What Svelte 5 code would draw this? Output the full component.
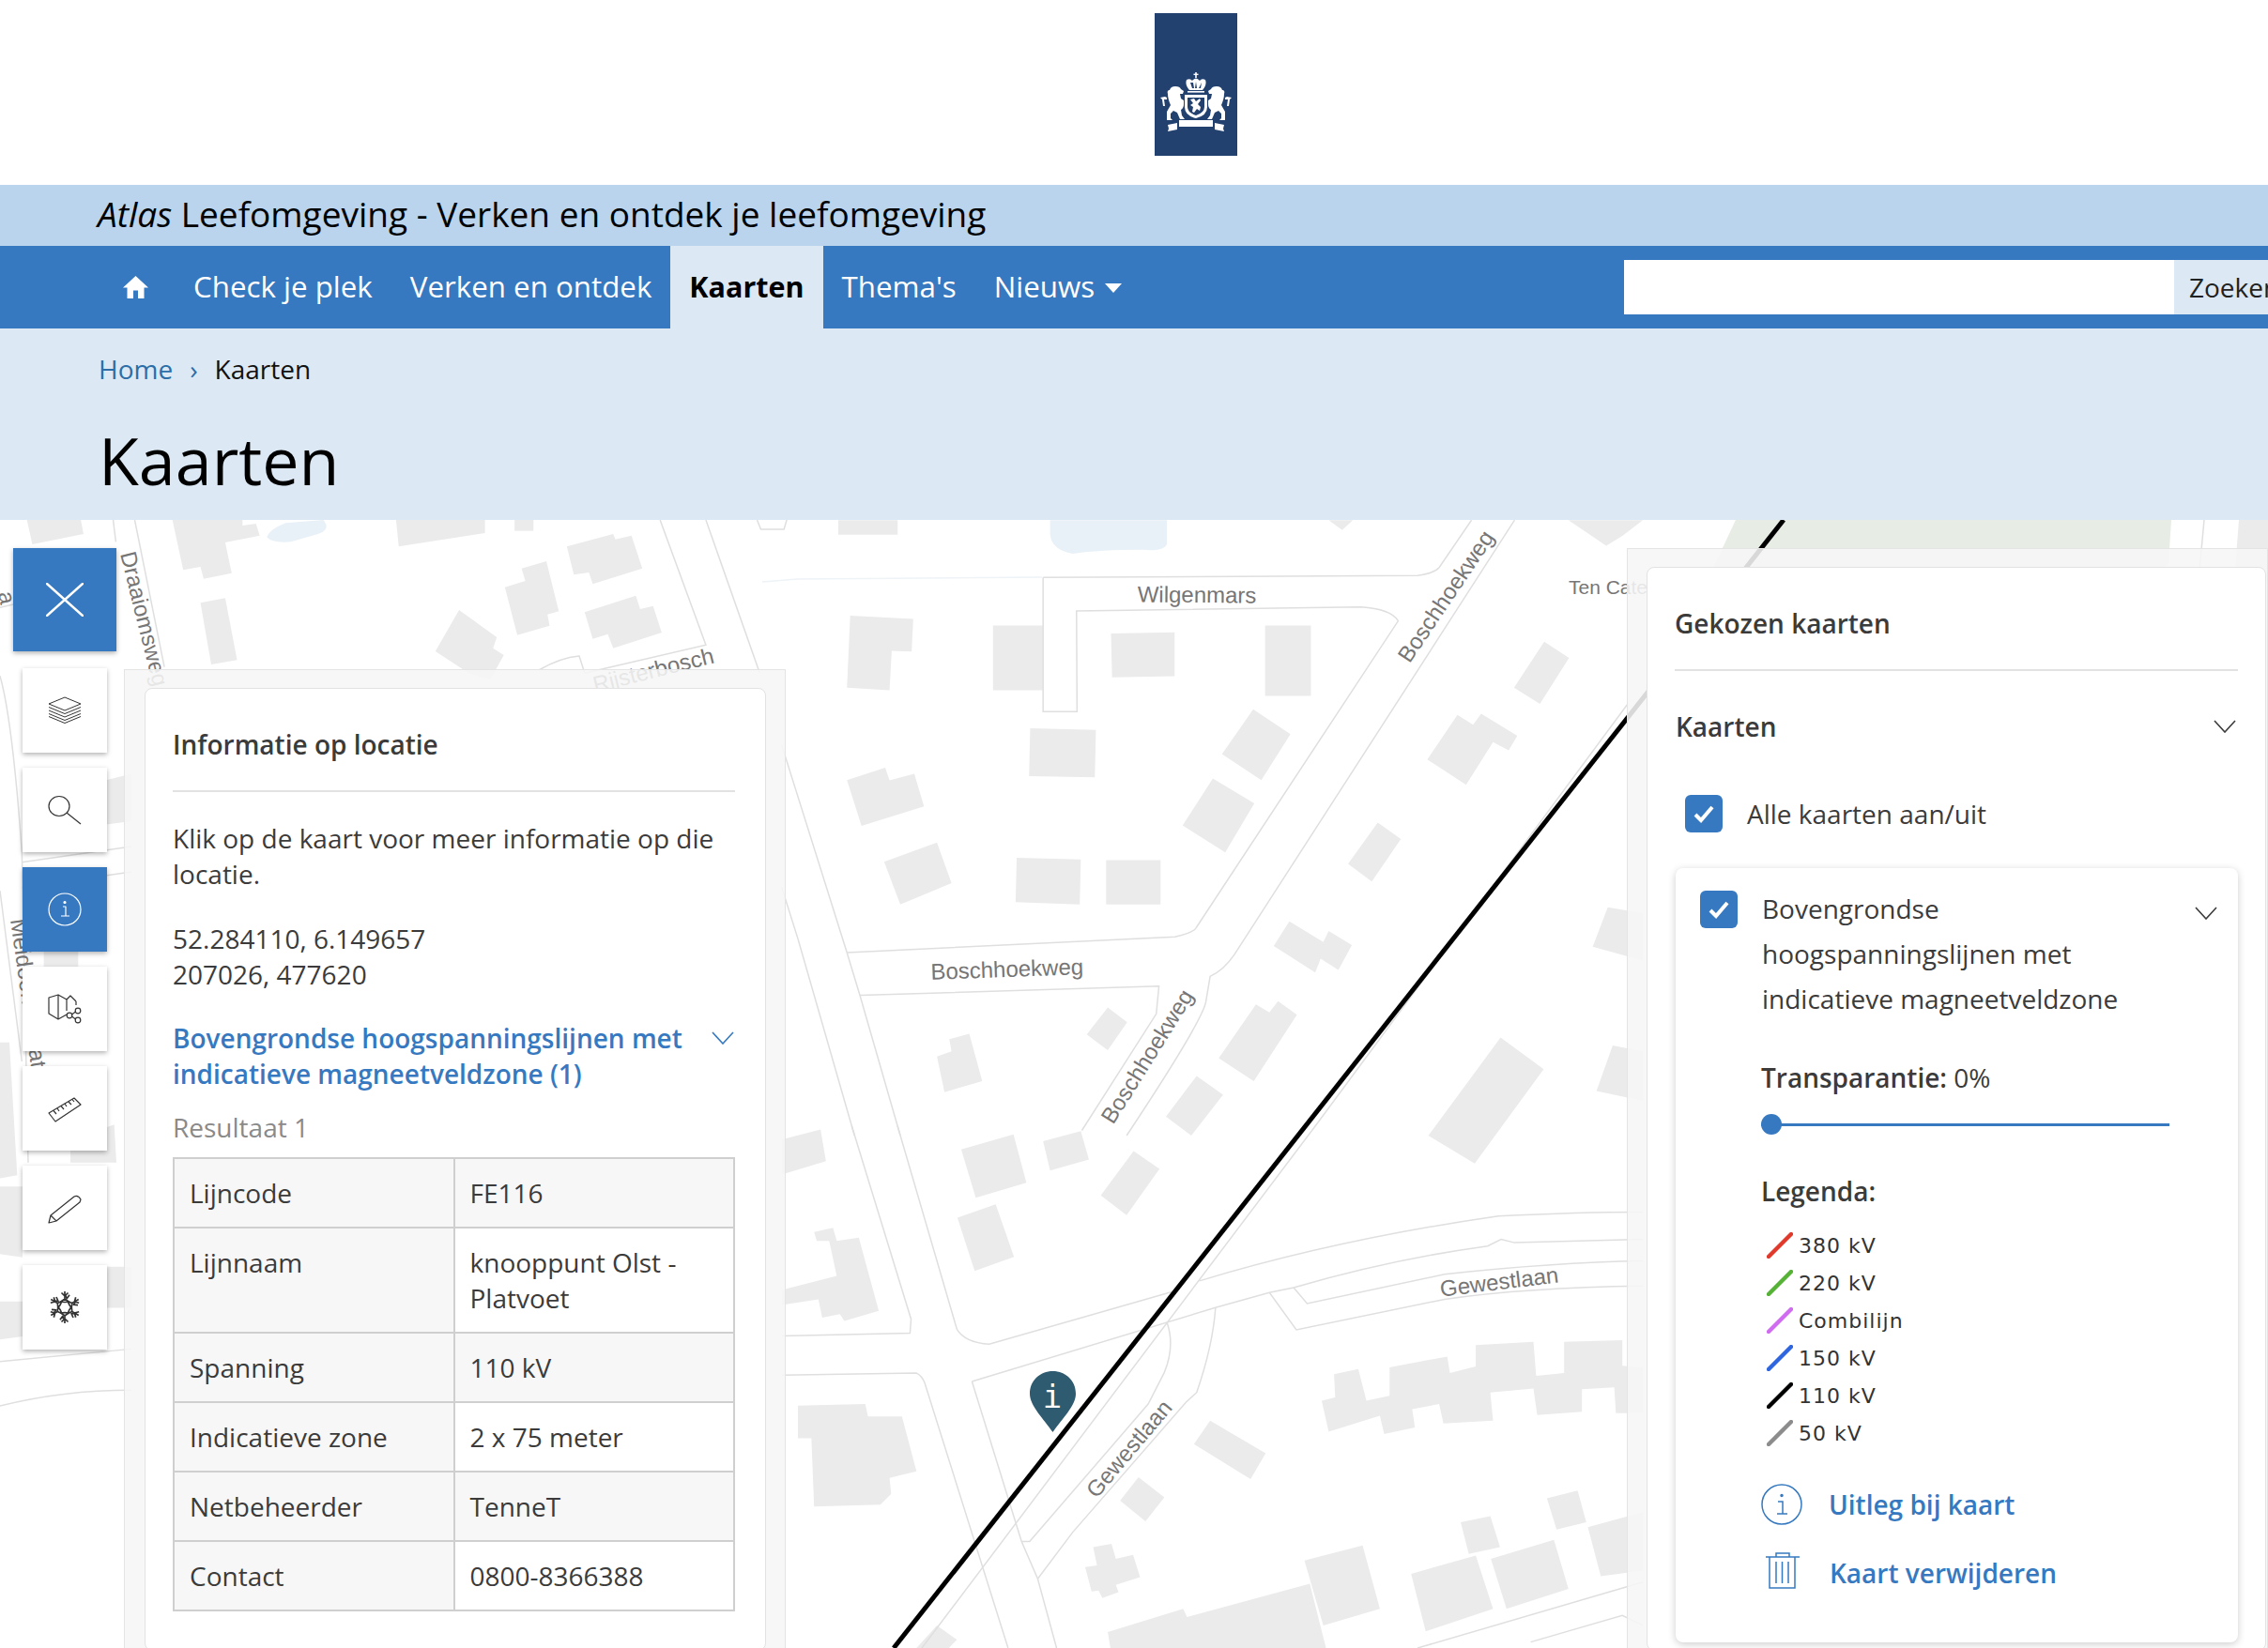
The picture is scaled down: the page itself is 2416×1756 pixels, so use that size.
<script>
  const navItems = [
    { label: 'Check je plek' },
    { label: 'Verken en ontdek' },
    { label: 'Kaarten', active: true },
    { label: "Thema's" },
    { label: 'Nieuws', caret: true },
  ];

  const rows = [
    ['Lijncode', 'FE116'],
    ['Lijnnaam', 'knooppunt Olst - Platvoet'],
    ['Spanning', '110 kV'],
    ['Indicatieve zone', '2 x 75 meter'],
    ['Netbeheerder', 'TenneT'],
    ['Contact', '0800-8366388'],
  ];

  const legend = [
    { color: '#e03a2c', label: '380 kV' },
    { color: '#55b236', label: '220 kV' },
    { color: '#cf6cf0', label: 'Combilijn' },
    { color: '#2f66e0', label: '150 kV' },
    { color: '#000000', label: '110 kV' },
    { color: '#8c8c8c', label: '50 kV' },
  ];

  const tools = ['layers', 'search', 'info', 'share', 'ruler', 'pencil', 'snow'];
  const snowArms = [0, 60, 120, 180, 240, 300];

  // map pieces, each set traced in its own scale (see the group transforms)
  const housesA = [
    '75,10 185,10 185,47 75,47',
    '97,252 214,260 211,343 174,341 170,441 91,434',
    '362,277 455,277 455,441 362,441',
    '581,297 699,294 699,405 583,408',
    '867,277 952,277 952,455 867,455',
    '431,537 553,541 551,661 429,658',
    '91,668 162,637 170,669 216,652 234,735 118,784',
    '160,875 258,826 285,929 190,983',
    '406,865 525,869 523,983 404,977',
    '572,871 673,871 673,983 572,983',
    '845,489 914,552 860,668 787,602',
    '770,664 847,727 793,851 714,783',
    '1385,318 1431,359 1377,475 1329,434',
    '1224,503 1253,528 1268,500 1335,556 1319,593 1290,572 1240,680 1168,616',
    '1076,776 1119,817 1065,925 1021,880',
    '912,1026 975,1078 985,1050 1028,1086 1003,1149 970,1120 960,1155 883,1088',
    '575,1244 611,1281 575,1352 536,1312',
    '281,1324 318,1310 342,1430 272,1458 258,1368 285,1355',
    '850,1236 875,1256 891,1228 926,1262 846,1430 781,1372',
    '740,1417 789,1465 730,1568 683,1520',
    '1304,1320 1384,1400 1256,1639 1170,1568',
    '1503,990 1568,1005 1568,1125 1475,1090',
    '1512,1340 1568,1355 1568,1480 1482,1455',
    '985,10 1030,10 1010,35',
    '1430,10 1568,10 1530,50 1500,75',
  ];
  const roadsA = [
    'M455,155 L1150,150 Q1180,145 1190,130 L1250,10',
    'M455,155 L455,495 L518,495 L517,240 L1045,230 Q1100,235 1114,265 L740,1040 Q735,1055 700,1065 L91,1105',
    'M1330,10 L810,1110 Q790,1150 765,1165 L757,1230 Q750,1280 610,1568',
    'M115,1213 L670,1190 L665,1260 L527,1555',
    'M-30,580 L91,1105 L115,1213 L190,1568',
    'M-30,940 L0,1070 L105,1568',
  ];
  const housesB = [
    '-30,40 42,10 52,105 -30,145',
    '303,70 400,25 424,170 330,215',
    '455,45 525,15 540,100 468,133',
    '623,75 671,128 610,267 562,208',
    '296,275 367,235 401,393 328,435',
    '30,318 65,305 72,345 113,335 150,555 86,585 78,565 45,575 38,520 -30,537 -30,492 72,450 58,345 35,345',
    '0,840 125,835 130,872 193,872 220,1037 170,1057 173,1105 153,1137 30,1143 25,938 0,938',
    '735,955 765,885 868,983 840,1060',
    '632,1055 680,1115 645,1187 598,1125',
    '972,825 997,815 995,745 1040,730 1055,825 1098,810 1098,725 1205,692 1210,742 1258,722 1258,658 1365,648 1370,750 1422,742 1422,648 1530,643 1530,720 1568,725 1568,862 1518,862 1515,785 1455,790 1455,858 1372,868 1365,788 1285,800 1290,885 1198,893 1190,835 1140,850 1145,905 1088,925 1080,870 985,918',
    '548,1265 582,1255 590,1300 622,1288 635,1355 590,1378 595,1400 565,1418 558,1395 545,1398 533,1325 555,1320',
    '1390,1118 1447,1095 1463,1190 1408,1212',
    '1230,1190 1285,1172 1303,1265 1245,1285',
    '1466,1205 1568,1160 1568,1335 1490,1352',
    '1286,1300 1403,1243 1430,1390 1315,1450',
    '1138,1345 1258,1290 1290,1450 1165,1518',
    '940,1305 1048,1260 1080,1450 975,1500',
    '575,1520 715,1450 722,1475 950,1375 980,1568 580,1568',
    '220,1568 258,1500 295,1543 280,1568',
  ];
  const roadsB = [
    'M100,0 L210,580 L208,622 L-30,630',
    'M185,0 L295,610 Q310,650 355,655 L700,495 M745,465 Q1000,340 1300,270 Q1450,258 1568,258',
    'M-30,748 L220,742 Q230,750 235,770 L390,1568',
    'M323,767 L775,545 L875,500 L920,485 Q1100,400 1280,360 L1305,340 L1330,350 L1568,340',
    'M323,767 L415,1248 L445,1360 L480,1568',
    'M875,500 L925,612 L1200,520 Q1350,485 1568,480',
    'M920,485 L945,533 L1200,445 Q1400,410 1568,405',
    'M775,545 Q770,660 740,800 L720,830 L510,1220 L445,1360',
    'M685,590 Q700,660 680,740 L650,835 L430,1248 L415,1248',
    'M1150,1568 L1568,1370',
    'M1360,1550 L1530,1470 L1568,1500',
  ];
  const housesTop = [
    '50,0 150,0 155,45 60,78',
    '320,0 450,0 450,18 475,12 482,50 418,72 430,170 378,188 372,150 340,160',
    '735,0 900,0 900,42 740,85',
    '955,0 990,0 990,35 955,35',
    '372,265 418,250 440,448 392,462',
    '1052,85 1138,45 1142,62 1172,50 1192,155 1100,205 1093,168 1065,175',
    '968,155 1014,132 1037,292 1016,302 1020,338 960,368 937,215 975,195',
    '1085,295 1180,242 1188,285 1212,275 1228,360 1138,410 1128,365 1100,380',
    '852,288 922,375 915,410 935,432 910,510 870,490 808,420',
  ];
  const roadsTop = [
    'M210,0 L215,70',
    'M250,0 L305,470',
    'M1225,0 L1310,400 L1085,490',
    'M1310,0 L1410,490',
    'M1000,480 Q1040,440 1075,435 L1085,490',
    'M1405,0 L1412,30 L1455,30 L1460,0',
    'M0,280 L25,270',
  ];
  const housesLeft = [
    '340,195 420,185 420,260 340,265',
    '0,610 30,610 55,820 0,825',
    '0,838 72,838 72,950 0,945',
    '0,1020 72,1020 72,1075 0,1080',
    '340,965 420,965 420,1030 340,1030',
    '225,765 365,740 372,800 225,800',
    '140,465 250,465 250,490 140,490',
  ];
  const roadsLeft = [
    'M0,30 Q40,100 70,310 L90,800',
    'M0,370 L70,640',
    'M70,325 L420,300',
    'M70,365 L420,340',
    'M0,1115 L420,1095',
    'M0,1185 Q200,1160 420,1160',
  ];
</script>

<div class="page">
  <header class="top">
    <svg class="logo" width="88" height="152" viewBox="0 0 88 152">
      <rect width="88" height="152" fill="#22416f" />
      <g fill="#fff">
        <rect x="43.2" y="63" width="1.6" height="6" />
        <rect x="41.5" y="64.6" width="5" height="1.4" />
        <path d="M34,71 q4,-2 6,1 q4,-5 8,0 q2,-3 6,-1 q2,5 -3,11 h-14 q-5,-6 -3,-11 z M38,74 l2,6 h2 l-1,-6 z M44,73 l-1,7 h2 z M50,74 l-3,6 h2 z" fill-rule="evenodd" />
        <rect x="35" y="83" width="18" height="1.6" />
        <path d="M32,87 h24 v13 q0,9 -12,12 q-12,-3 -12,-12 z M35,90 v10 q0,6 9,9 q9,-3 9,-9 v-10 z" fill-rule="evenodd" />
        <path d="M38,92 l4,-1 l2,3 l4,-3 l1,2 l-3,4 l3,3 l-1,4 l-3,-2 l-3,4 l-2,-1 l1,-5 l-3,-2 l3,-2 z" />
        <path d="M16,82 q1,-4 6,-4 q5,0 6,3 l3,2 l-1,3 l-3,0 l1,5 l3,2 v4 q0,4 -3,6 l1,6 l3,4 h-5 l-3,-7 l-4,-2 l-3,3 l0,5 l2,2 h-6 l0,-9 l4,-7 q-3,-7 -3,-12 q-1,-3 1,-4 z" />
        <path d="M72,82 q-1,-4 -6,-4 q-5,0 -6,3 l-3,2 l1,3 l3,0 l-1,5 l-3,2 v4 q0,4 3,6 l-1,6 l-3,4 h5 l3,-7 l4,-2 l3,3 l0,5 l-2,2 h6 l0,-9 l-4,-7 q3,-7 3,-12 q1,-3 -1,-4 z" />
        <path d="M6,90 l5,-1 l2,1 l0,2 l-3,0 l1,7 l-2,0 l-1,-7 z" />
        <path d="M82,90 l-5,-1 l-2,1 l0,2 l3,0 l-1,7 l2,0 l1,-7 z" />
        <path d="M26,114 h36 v7 h-36 z" />
        <path d="M14,119 l10,-2 v7 l-10,2 l1,-3 z" />
        <path d="M74,119 l-10,-2 v7 l10,2 l-1,-3 z" />
      </g>
    </svg>
  </header>

  <div class="title-bar"><em>Atlas</em> Leefomgeving - Verken en ontdek je leefomgeving</div>

  <nav class="nav">
    <a class="nav-home" href="#home" aria-label="Home">
      <svg width="27" height="24" viewBox="0 0 27 24">
        <path d="M13.5,0 L27,12.5 H22.5 V24 H16 V15.5 H11 V24 H4.5 V12.5 H0 Z" fill="#fff" />
      </svg>
    </a>
    {#each navItems as item}
      <a class="nav-item" class:active={item.active} href="#nav">
        {item.label}
        {#if item.caret}<span class="caret"></span>{/if}
      </a>
    {/each}
    <div class="search">
      <div class="search-input"></div>
      <div class="search-btn">Zoeken</div>
    </div>
  </nav>

  <div class="intro">
    <div class="crumbs">
      <a href="#home">Home</a><span class="sep">›</span><span>Kaarten</span>
    </div>
    <h1>Kaarten</h1>
  </div>

  <main class="map">
    <svg class="map-canvas" viewBox="0 554 2416 1202" preserveAspectRatio="none">
      <rect x="0" y="554" width="2416" height="1202" fill="#fff" />
      <polygon points="1849,554 2313,554 2310,600 2290,620 1818,620" fill="#e7ece4" />
      <polygon points="2385,554 2416,554 2416,620 2380,620" fill="#ebebeb" />
      <path d="M2348,554 L2340,640" class="road" />
      <path d="M812,620 L850,617 L1110,615" class="road-light" />

      <g transform="translate(850 550) scale(.574 .4209)">
        <path d="M468,10 H685 V70 Q680,90 640,85 Q560,85 510,95 Q470,85 468,45 Z" fill="#e9f1f8" />
        {#each housesA as p}<polygon points={p} class="house" />{/each}
        {#each roadsA as d}<path {d} class="road" />{/each}
      </g>
      <g transform="translate(850 1200) scale(.574 .3546)">
        {#each housesB as p}<polygon points={p} class="house" />{/each}
        {#each roadsB as d}<path {d} class="road" />{/each}
      </g>
      <g transform="translate(0 554) scale(.574 .3333)">
        <path d="M495,55 Q500,30 530,10 L600,0 Q615,30 590,45 L540,70 Q505,75 495,55 Z" fill="#e9f1f8" />
        {#each housesTop as p}<polygon points={p} class="house" />{/each}
        {#each roadsTop as d}<path {d} class="road" />{/each}
      </g>
      <g transform="translate(0 700) scale(.3333 .6734)">
        {#each housesLeft as p}<polygon points={p} class="house" />{/each}
        {#each roadsLeft as d}<path {d} class="road" />{/each}
      </g>

      <polyline points="982,1756 1401,1200 1734,750" class="road" />
      <line x1="952" y1="1756" x2="1900" y2="554" stroke="#000" stroke-width="5" />

      <text x="1275" y="642" text-anchor="middle" class="label" transform="rotate(.5 1275 642)">Wilgenmars</text>
      <text x="1073" y="1041" text-anchor="middle" class="label" transform="rotate(-2 1073 1041)">Boschhoekweg</text>
      <text x="1547" y="640" text-anchor="middle" class="label" transform="rotate(-56 1547 640)">Boschhoekweg</text>
      <text x="1229" y="1130" text-anchor="middle" class="label" transform="rotate(-58 1229 1130)">Boschhoekweg</text>
      <text x="1598" y="1374" text-anchor="middle" class="label" transform="rotate(-7 1598 1374)">Gewestlaan</text>
      <text x="1209" y="1549" text-anchor="middle" class="label" transform="rotate(-50 1209 1549)">Gewestlaan</text>
      <text x="1671" y="633" class="label small">Ten Cate</text>
      <text x="128" y="590" class="label" transform="rotate(76 128 590)">Draaiomsweg</text>
      <text x="11" y="980" class="label" transform="rotate(82 11 980)">Meidoornstraat</text>
      <text x="762" y="706" text-anchor="end" class="label" transform="rotate(-14 762 706)">Rijsterbosch</text>
      <text x="-2" y="632" class="label" transform="rotate(78 -2 632)">a</text>

      <path d="M1121.5,1526 C1112,1512 1097,1498 1097,1485 C1097,1471 1108,1461 1121.5,1461 C1135,1461 1146,1471 1146,1485 C1146,1498 1131,1512 1121.5,1526 Z" fill="#2f5b70" />
      <text x="1121" y="1500" text-anchor="middle" class="pin-i">i</text>
    </svg>

    <div class="toolbar">
      <button class="close" aria-label="Sluiten">
        <svg width="40" height="36" viewBox="0 0 40 36">
          <path d="M1,1 L39,35 M39,1 L1,35" stroke="#fff" stroke-width="2.4" stroke-linecap="round" />
        </svg>
      </button>
      {#each tools as tool}
        <button class="tool" class:selected={tool === 'info'} aria-label={tool}>
          <svg width="36" height="36" viewBox="0 0 36 36" fill="none" stroke="currentColor" stroke-width="1.2" stroke-linejoin="round">
            {#if tool === 'layers'}
              <path d="M18,4 L35,11 L18,18 L1,11 Z" stroke-width="1" />
              <path d="M1,14.5 L18,21.5 L35,14.5 M1,18 L18,25 L35,18 M1,21.5 L18,28.5 L35,21.5 M1,24.5 L18,31.5 L35,24.5" stroke-width="1" />
            {:else if tool === 'search'}
              <ellipse cx="12" cy="14" rx="11" ry="10.5" />
              <path d="M20,21 L35,33" />
            {:else if tool === 'info'}
              <circle cx="18" cy="18" r="17" />
              <path d="M16,15 H19 V25 M14,25 H23" />
              <circle cx="18" cy="10.5" r="1" fill="currentColor" />
            {:else if tool === 'share'}
              <path d="M1,6 L11,3 L11,29 L1,23 Z M11,3 L20,8 L24,4 L30,10 M11,29 L20,24 M20,8 V20 M30,10 V14" />
              <circle cx="23" cy="25" r="2.8" />
              <circle cx="32" cy="20" r="2.8" />
              <circle cx="32" cy="30" r="2.8" />
              <path d="M25.5,24 L29.5,21 M25.5,26 L29.5,29" />
            {:else if tool === 'ruler'}
              <path d="M1,23 L28,7 L35,14 L8,32 Z" />
              <path d="M6,20.5 L9,24 M10,18 L12,21 M14,15.5 L17,19 M18,13 L20,16 M22,11 L25,14 M26,8.5 L28,11" />
            {:else if tool === 'pencil'}
              <path d="M1,34 L3,26 L28,6 Q32,4 35,9 L34,12 L9,32 Z M3,26 L9,32" />
            {:else if tool === 'snow'}
              <g stroke-width="1.7">
                {#each snowArms as angle}
                  <path d="M18,1 V9 M14.5,2.5 L18,6 L21.5,2.5 M18,9 L14,12 L18,12.5 L22,12 Z" transform="rotate({angle} 18 18)" />
                {/each}
                {#each snowArms as angle}
                  <path d="M9,7 L11,11.5 L7,11" transform="rotate({angle} 18 18)" />
                {/each}
              </g>
            {/if}
          </svg>
        </button>
      {/each}
    </div>

    <aside class="panel panel-left">
      <section class="card">
        <h2>Informatie op locatie</h2>
        <p class="first">Klik op de kaart voor meer informatie op die locatie.</p>
        <p>52.284110, 6.149657<br />207026, 477620</p>
        <div class="result-head">
          <a href="#kaart">Bovengrondse hoogspanningslijnen met indicatieve magneetveldzone (1)</a>
          <svg class="chev" width="24" height="14" viewBox="0 0 24 14" fill="none" stroke="#3679c0" stroke-width="1.6">
            <path d="M1,1 L12,13 L23,1" />
          </svg>
        </div>
        <div class="result-label">Resultaat 1</div>
        <table>
          <tbody>
            {#each rows as row}
              <tr><td class="k">{row[0]}</td><td>{row[1]}</td></tr>
            {/each}
          </tbody>
        </table>
      </section>
    </aside>

    <aside class="panel panel-right">
      <section class="card">
        <h2>Gekozen kaarten</h2>
        <div class="group-head">
          <h3>Kaarten</h3>
          <svg width="24" height="14" viewBox="0 0 24 14" fill="none" stroke="#3b3b3b" stroke-width="1.6">
            <path d="M1,1 L12,13 L23,1" />
          </svg>
        </div>
        <div class="all-row">
          <span class="check">
            <svg width="22" height="20" viewBox="0 0 22 20" fill="none" stroke="#fff" stroke-width="4">
              <path d="M2,11 L8,17 L20,3" />
            </svg>
          </span>
          <span>Alle kaarten aan/uit</span>
        </div>

        <div class="map-card">
          <div class="map-head">
            <span class="check">
              <svg width="22" height="20" viewBox="0 0 22 20" fill="none" stroke="#fff" stroke-width="4">
                <path d="M2,11 L8,17 L20,3" />
              </svg>
            </span>
            <div class="map-name">Bovengrondse hoogspanningslijnen met indicatieve magneetveldzone</div>
            <svg class="map-chev" width="24" height="14" viewBox="0 0 24 14" fill="none" stroke="#3b3b3b" stroke-width="1.6">
              <path d="M1,1 L12,13 L23,1" />
            </svg>
          </div>

          <div class="transp"><b>Transparantie:</b> 0%</div>
          <div class="slider"><span class="knob"></span></div>

          <div class="legend-title">Legenda:</div>
          <ul class="legend">
            {#each legend as item}
              <li>
                <svg width="28" height="28" viewBox="0 0 28 28">
                  <line x1="2" y1="26" x2="26" y2="2" stroke={item.color} stroke-width="4.4" stroke-linecap="round" />
                </svg>
                <span>{item.label}</span>
              </li>
            {/each}
          </ul>

          <a class="action first-action" href="#uitleg">
            <svg width="44" height="44" viewBox="0 0 44 44" fill="none" stroke="#3679c0" stroke-width="1.5">
              <circle cx="22" cy="22" r="21" />
              <path d="M18,19 H23 V32 M17,32 H28" />
              <circle cx="22" cy="12.5" r="1" fill="#3679c0" />
            </svg>
            <span>Uitleg bij kaart</span>
          </a>
          <a class="action second-action" href="#verwijderen">
            <svg width="38" height="40" viewBox="0 0 38 40" fill="none" stroke="#3679c0" stroke-width="1.5">
              <path d="M1,5 H37 M12,5 V1 H26 V5 M5,5 V38 H32 V5 M12,10 V33 M18.5,10 V33 M25,10 V33" />
            </svg>
            <span>Kaart verwijderen</span>
          </a>
        </div>
      </section>
    </aside>
  </main>
</div>

<style>
  :global(body) {
    margin: 0;
    background: #fff;
    overflow: hidden;
  }

  .page {
    width: 2416px;
    height: 1756px;
    display: flex;
    flex-direction: column;
    overflow: hidden;
    font-family: "Open Sans", "Liberation Sans", sans-serif;
    font-size: 28px;
    color: #3b3b3b;
  }

  a {
    text-decoration: none;
  }

  .top {
    height: 197px;
    flex-shrink: 0;
    display: flex;
    justify-content: center;
    align-items: flex-start;
    padding-left: 132px;
    box-sizing: border-box;
  }
  .logo {
    margin-top: 14px;
  }

  .title-bar {
    height: 65px;
    flex-shrink: 0;
    box-sizing: border-box;
    padding-left: 104px;
    background: #b9d4ec;
    color: #000;
    font-size: 37px;
    line-height: 62px;
  }

  .nav {
    height: 88px;
    flex-shrink: 0;
    display: flex;
    align-items: stretch;
    padding-left: 104px;
    background: #3679c0;
  }
  .nav-home {
    width: 82px;
    box-sizing: border-box;
    padding-left: 27px;
    display: flex;
    align-items: center;
  }
  .nav-item {
    padding: 0 20px 2px;
    display: flex;
    align-items: center;
    color: #fff;
    font-size: 31.3px;
  }
  .nav-item.active {
    background: #dce9f5;
    color: #000;
    font-weight: 700;
    font-size: 30.5px;
  }
  .caret {
    margin-left: 11px;
    margin-top: 4px;
    border-top: 10px solid #fff;
    border-left: 9px solid transparent;
    border-right: 9px solid transparent;
  }
  .search {
    margin-left: auto;
    margin-right: -30px;
    align-self: center;
    height: 58px;
    display: flex;
  }
  .search-input {
    width: 586px;
    background: #fff;
  }
  .search-btn {
    width: 130px;
    box-sizing: border-box;
    padding-left: 16px;
    background: #dce9f5;
    color: #222;
    line-height: 58px;
  }

  .intro {
    height: 204px;
    flex-shrink: 0;
    box-sizing: border-box;
    padding: 24px 0 0 105px;
    background: #dce9f5;
  }
  .crumbs {
    line-height: 38px;
    color: #111;
  }
  .crumbs a {
    color: #2c6ea8;
  }
  .sep {
    margin: 0 18px;
    color: #2c6ea8;
  }
  h1 {
    margin: 30px 0 0;
    font-size: 70px;
    font-weight: 400;
    line-height: 96px;
    color: #000;
  }

  .map {
    flex: 1;
    position: relative;
    overflow: hidden;
  }
  .map-canvas {
    position: absolute;
    inset: 0;
    width: 100%;
    height: 100%;
  }
  .house {
    fill: #ebebeb;
  }
  .road {
    fill: none;
    stroke: #dfdfdf;
    stroke-width: 1.5;
    vector-effect: non-scaling-stroke;
  }
  .road-light {
    fill: none;
    stroke: #eef3f7;
    stroke-width: 1.5;
  }
  .label {
    font-family: "Liberation Sans", sans-serif;
    font-size: 24px;
    fill: #767676;
  }
  .label.small {
    font-size: 21px;
  }
  .pin-i {
    font-family: "DejaVu Sans Mono", monospace;
    font-size: 34px;
    fill: #fff;
  }

  .toolbar {
    position: absolute;
    left: 14px;
    top: 30px;
    width: 110px;
    display: flex;
    flex-direction: column;
    align-items: center;
    gap: 16px;
  }
  .toolbar button {
    border: 0;
    padding: 0;
    display: flex;
    align-items: center;
    justify-content: center;
    box-shadow: 0 2px 5px rgba(0, 0, 0, 0.3);
  }
  .close {
    width: 110px;
    height: 110px;
    margin-bottom: 2px;
    background: #3679c0;
  }
  .tool {
    width: 90px;
    height: 90px;
    background: #fff;
    color: #333;
  }
  .tool.selected {
    background: #3679c0;
    color: #fff;
  }

  .panel {
    position: absolute;
    bottom: -4px;
    box-sizing: border-box;
    background: rgba(246, 246, 246, 0.88);
    border: 1px solid #e4e4e4;
    display: flex;
  }
  .panel-left {
    left: 132px;
    top: 159px;
    width: 705px;
    padding: 19px 20px 0 21px;
  }
  .panel-right {
    left: 1733px;
    top: 30px;
    right: 0;
    padding: 19px 1px 0 20px;
  }
  .card {
    flex: 1;
    box-sizing: border-box;
    background: #fff;
    border: 1px solid #e2e2e2;
    border-radius: 8px;
    padding: 38px 32px 0 29px;
  }
  h2 {
    margin: 0;
    padding-bottom: 28px;
    border-bottom: 2px solid #e2e2e2;
    font-size: 28px;
    font-weight: 600;
    line-height: 42px;
    color: #3b3b3b;
  }
  p {
    margin: 31px 0 0;
    line-height: 38px;
  }
  p.first {
    margin-top: 30px;
  }
  .result-head {
    margin-top: 30px;
    display: flex;
    justify-content: space-between;
    align-items: flex-start;
    gap: 20px;
    line-height: 38px;
  }
  .result-head a {
    color: #3679c0;
    font-weight: 600;
  }
  .chev {
    flex-shrink: 0;
    margin-top: 12px;
    margin-right: 1px;
  }
  .result-label {
    margin-top: 19px;
    line-height: 38px;
    color: #8a8a8a;
  }
  table {
    width: 100%;
    margin-top: 13px;
    border-collapse: collapse;
    table-layout: fixed;
    line-height: 38px;
  }
  tr:nth-child(odd) td {
    background: #f7f7f7;
  }
  td {
    box-sizing: border-box;
    border: 2px solid #cfcfcf;
    padding: 17px 16px;
    vertical-align: top;
  }
  td.k {
    width: 50%;
    background: #f7f7f7;
  }

  .panel-right .card {
    padding: 38px 29px 0 29px;
  }
  .group-head {
    margin-top: 38px;
    display: flex;
    justify-content: space-between;
    align-items: center;
    padding-left: 1px;
    padding-right: 2px;
  }
  h3 {
    margin: 0;
    font-size: 28px;
    font-weight: 600;
    line-height: 42px;
  }
  .all-row {
    margin-top: 52px;
    padding-left: 11px;
    display: flex;
    align-items: center;
    gap: 26px;
    height: 40px;
  }
  .check {
    width: 40px;
    height: 40px;
    flex-shrink: 0;
    border-radius: 6px;
    background: #3679c0;
    display: flex;
    align-items: center;
    justify-content: center;
  }
  .map-card {
    margin-top: 38px;
    margin-left: 1px;
    box-sizing: border-box;
    padding: 19px 22px 52px 26px;
    background: #fff;
    border-radius: 8px;
    box-shadow: 0 2px 8px rgba(0, 0, 0, 0.2);
  }
  .map-head {
    display: flex;
    align-items: flex-start;
    gap: 26px;
  }
  .map-head .check {
    margin-top: 5px;
  }
  .map-name {
    flex: 1;
    line-height: 48px;
  }
  .map-chev {
    flex-shrink: 0;
    margin-top: 22px;
  }
  .transp {
    margin-top: 41px;
    padding-left: 65px;
    line-height: 38px;
  }
  .transp b,
  .legend-title {
    font-weight: 600;
  }
  .slider {
    position: relative;
    margin: 20px 51px 0 65px;
    height: 22px;
    display: flex;
    align-items: center;
  }
  .slider::before {
    content: "";
    flex: 1;
    height: 3px;
    background: #3679c0;
  }
  .knob {
    position: absolute;
    left: 0;
    top: 0;
    width: 22px;
    height: 22px;
    border-radius: 50%;
    background: #3679c0;
  }
  .legend-title {
    margin-top: 41px;
    padding-left: 65px;
    line-height: 38px;
  }
  .legend {
    list-style: none;
    margin: 19px 0 0;
    padding: 0 0 0 71px;
  }
  .legend li {
    height: 40px;
    display: flex;
    align-items: center;
    gap: 6px;
    font-family: "DejaVu Sans", sans-serif;
    font-size: 22px;
    letter-spacing: 1px;
    color: #333;
  }
  .action {
    display: flex;
    align-items: center;
    height: 44px;
    color: #3679c0;
    font-weight: 600;
    font-size: 28px;
  }
  .first-action {
    margin-top: 34px;
    padding-left: 65px;
    gap: 28px;
  }
  .second-action {
    margin-top: 29px;
    padding-left: 69px;
    gap: 31px;
  }
  .second-action svg {
    margin-top: -4px;
  }
</style>
